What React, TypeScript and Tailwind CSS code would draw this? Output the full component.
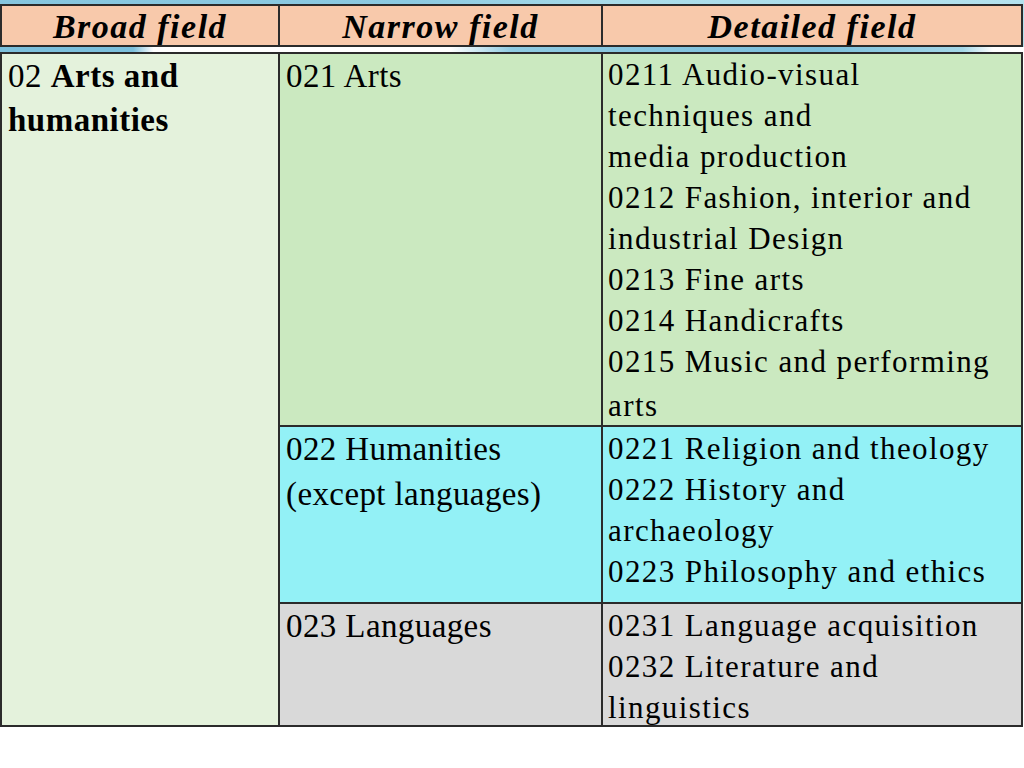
import React from "react";

const serif = { fontFamily: '"Liberation Serif", "Times New Roman", serif' };

const HeaderCell = ({ children }: { children: React.ReactNode }) => (
  <div className="flex items-center justify-center bg-[#f8c9ab] border-r-2 border-[#2b2b2b]">
    <span className="text-[34px] font-bold italic tracking-[1.5px] text-black leading-none pt-[3px]" style={serif}>
      {children}
    </span>
  </div>
);

const DLines = ({ lines, className = "" }: { lines: string[]; className?: string }) => (
  <div className={`flex flex-col ${className}`}>
    {lines.map((l, i) => (
      <div
        key={i}
        className={`whitespace-nowrap text-[31px] leading-[41px] tracking-[1.4px] text-black ${l === "arts" ? "mt-[3px]" : ""}`}
        style={serif}
      >
        {l}
      </div>
    ))}
  </div>
);

const NLines = ({ lines }: { lines: string[] }) => (
  <div className="flex flex-col">
    {lines.map((l, i) => (
      <div key={i} className="whitespace-nowrap text-[33px] leading-[45px] tracking-[0.4px] text-black" style={serif}>
        {l}
      </div>
    ))}
  </div>
);

export default function App() {
  return (
    <div className="w-[1024px] h-[768px] bg-white overflow-hidden flex flex-col">
      {/* top decorative band + header */}
      <div className="bg-[linear-gradient(90deg,#86c6df_0%,#8ccae2_40%,#a9dcea_60%,#b4e2ee_100%)] pt-[4px]">
        <div className="grid grid-cols-[278px_323px_420px] h-[43px] border-y-2 border-l-2 border-[#2b2b2b] w-[1023px]">
          <HeaderCell>Broad field</HeaderCell>
          <HeaderCell>Narrow field</HeaderCell>
          <HeaderCell>Detailed field</HeaderCell>
        </div>
        <div className="h-[5px] bg-[linear-gradient(90deg,#7cc0dc_0%,#7cc0dc_13%,#ffffff_15%,#ffffff_44%,#8fcbe2_50%,#7cc0dc_80%,#a5d8e8_94%,#ffffff_97%)]" />
      </div>

      {/* body table */}
      <div className="grid grid-cols-[278px_323px_420px] grid-rows-[373px_177px_123px] border-t-2 border-l-2 border-[#2b2b2b] w-[1023px]">
        <div className="row-span-3 bg-[#e4f2dc] border-r-2 border-b-2 border-[#2b2b2b] pl-[6px]">
          <div className="text-[33px] leading-[44px] tracking-[0.5px] text-black" style={serif}>
            <div className="whitespace-nowrap">
              02 <span className="font-bold">Arts and</span>
            </div>
            <div className="whitespace-nowrap font-bold">humanities</div>
          </div>
        </div>

        <div className="bg-[#cbe9c0] border-r-2 border-b-2 border-[#2b2b2b] pl-[6px]">
          <NLines lines={["021 Arts"]} />
        </div>
        <div className="bg-[#cbe9c0] border-r-2 border-b-2 border-[#2b2b2b] pl-[5px]">
          <DLines
            lines={[
              "0211 Audio-visual",
              "techniques and",
              "media production",
              "0212 Fashion, interior and",
              "industrial Design",
              "0213 Fine arts",
              "0214 Handicrafts",
              "0215 Music and performing",
              "arts",
            ]}
          />
        </div>

        <div className="bg-[#93f1f6] border-r-2 border-b-2 border-[#2b2b2b] pl-[6px]">
          <NLines lines={["022 Humanities", "(except languages)"]} />
        </div>
        <div className="bg-[#93f1f6] border-r-2 border-b-2 border-[#2b2b2b] pl-[5px] pt-[1px]">
          <DLines
            lines={[
              "0221 Religion and theology",
              "0222 History and",
              "archaeology",
              "0223 Philosophy and ethics",
            ]}
          />
        </div>

        <div className="bg-[#d9d9d9] border-r-2 border-b-2 border-[#2b2b2b] pl-[6px]">
          <NLines lines={["023 Languages"]} />
        </div>
        <div className="bg-[#d9d9d9] border-r-2 border-b-2 border-[#2b2b2b] pl-[5px] pt-[1px]">
          <DLines lines={["0231 Language acquisition", "0232 Literature and", "linguistics"]} />
        </div>
      </div>
    </div>
  );
}
